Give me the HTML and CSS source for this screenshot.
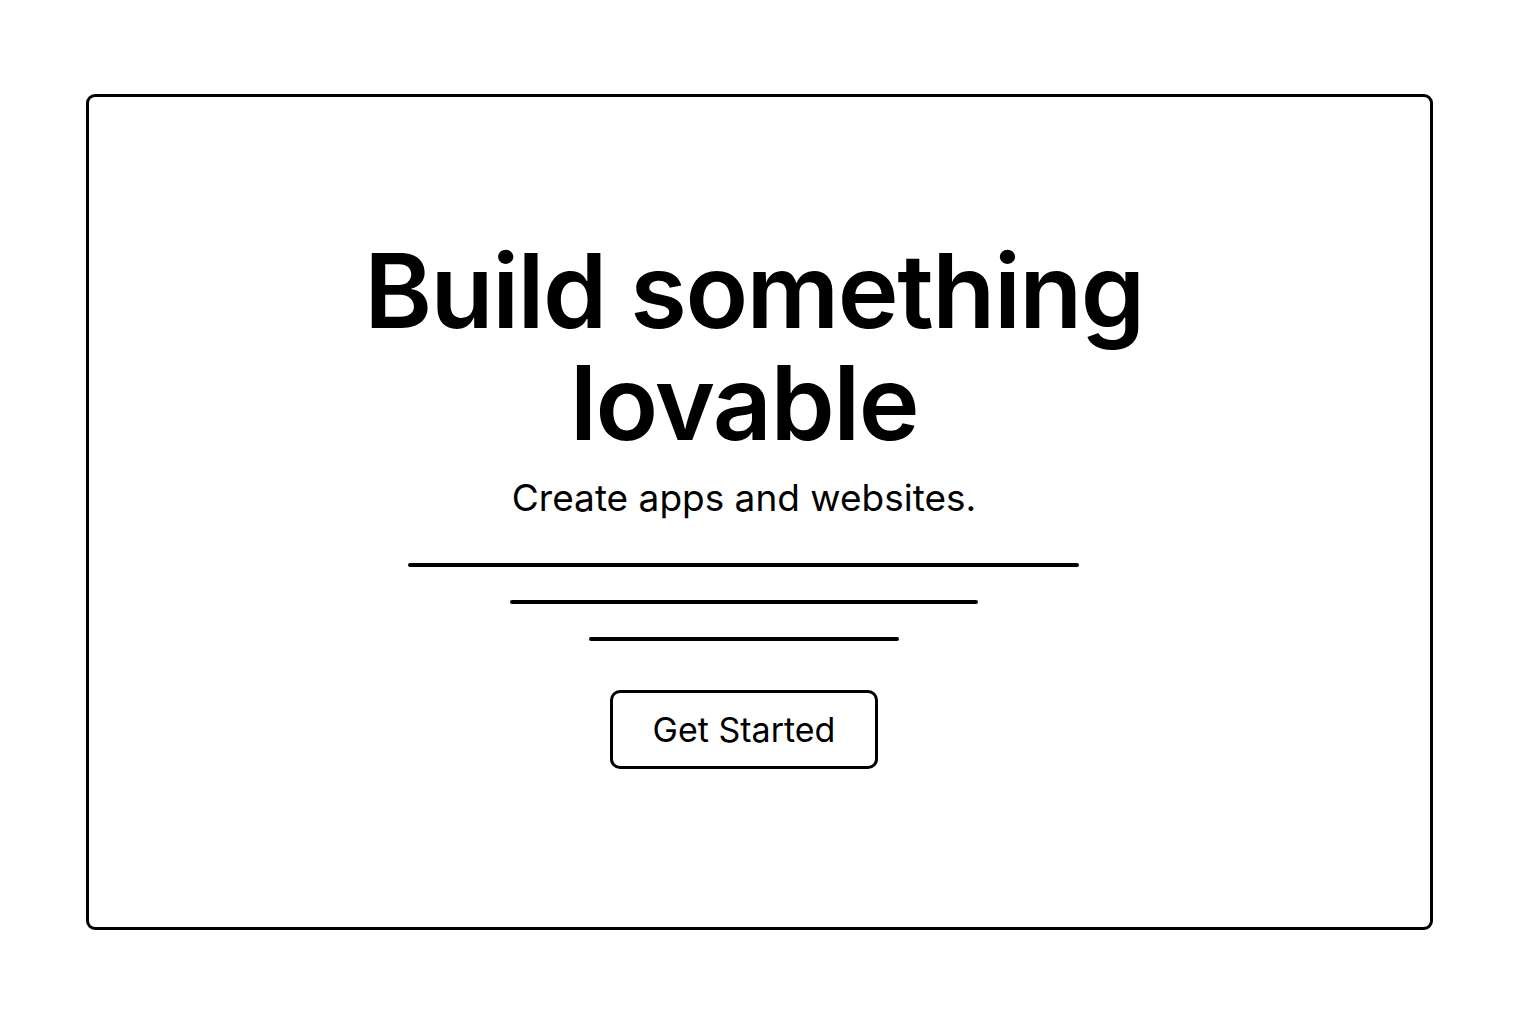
FILE: index.html
```html
<!DOCTYPE html>
<html lang="en">
<head>
<meta charset="utf-8">
<title>Build something lovable</title>
<link rel="stylesheet" href="styles.css">
</head>
<body>
  <main class="frame">
    <section class="hero">
      <h1 class="title">Build something<br>lovable</h1>
      <p class="subtitle">Create apps and websites.</p>
      <div class="lines">
        <span class="line line-1"></span>
        <span class="line line-2"></span>
        <span class="line line-3"></span>
      </div>
      <button class="cta" type="button">Get Started</button>
    </section>
  </main>
</body>
</html>
```

FILE: styles.css
```css
* { box-sizing: border-box; }
html, body { margin: 0; padding: 0; background: #fff; }
body {
  font-family: Inter, "Noto Sans", "Liberation Sans", sans-serif;
  color: #000;
  padding: 94px 0 0 86px;
}
.frame {
  width: 1347px;
  height: 836px;
  border: 3.5px solid #000;
  border-radius: 9px;
  background: #fff;
  display: flex;
  justify-content: center;
  padding-right: 31px;
  padding-top: 137.5px;
}
.hero {
  display: flex;
  flex-direction: column;
  align-items: center;
}
.title {
  margin: 0;
  font-size: 103px;
  line-height: 112px;
  font-weight: 600;
  text-align: center;
  letter-spacing: -1.5px;
  text-indent: 20px;
}
.subtitle {
  margin: 17px 0 0;
  font-size: 37px;
  line-height: 43px;
  font-weight: 400;
}
.lines {
  display: flex;
  flex-direction: column;
  align-items: center;
  gap: 33px;
  margin-top: 44px;
}
.line {
  display: block;
  height: 4px;
  background: #000;
  border-radius: 2px;
}
.line-1 { width: 671px; }
.line-2 { width: 468px; }
.line-3 { width: 310px; }
.cta {
  margin-top: 49px;
  width: 268px;
  height: 79px;
  border: 3.5px solid #000;
  border-radius: 10px;
  background: #fff;
  font-family: inherit;
  font-size: 34px;
  color: #000;
  padding: 0;
}
```
